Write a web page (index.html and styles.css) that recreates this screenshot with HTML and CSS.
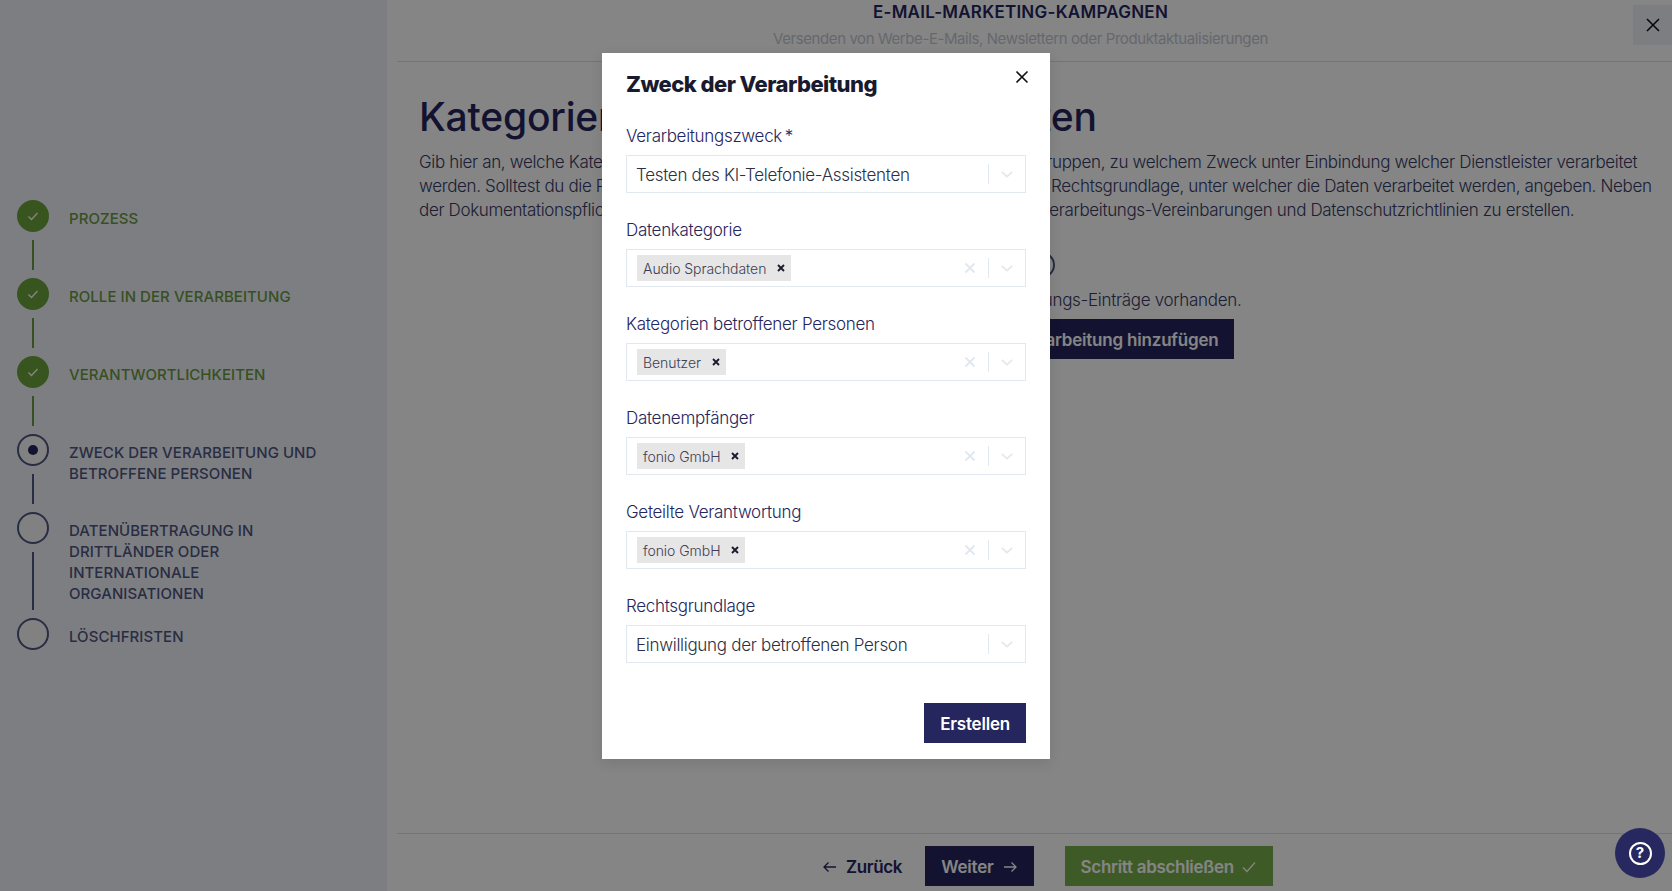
FILE: index.html
```html
<!DOCTYPE html>
<html lang="de">
<head>
<meta charset="utf-8">
<title>Zweck der Verarbeitung</title>
<link rel="stylesheet" href="styles.css">
</head>
<body>
<div class="page">
  <aside class="sidebar">
    <ol class="steps">
      <li class="step done">
        <div class="rail"><span class="dot"><svg viewBox="0 0 16 16" class="check"><path d="M3.500 8.500l3 3 6-6.500"/></svg></span><span class="link"></span></div>
        <span class="step-label">Prozess</span>
      </li>
      <li class="step done">
        <div class="rail"><span class="dot"><svg viewBox="0 0 16 16" class="check"><path d="M3.500 8.500l3 3 6-6.500"/></svg></span><span class="link"></span></div>
        <span class="step-label">Rolle in der Verarbeitung</span>
      </li>
      <li class="step done">
        <div class="rail"><span class="dot"><svg viewBox="0 0 16 16" class="check"><path d="M3.500 8.500l3 3 6-6.500"/></svg></span><span class="link"></span></div>
        <span class="step-label">Verantwortlichkeiten</span>
      </li>
      <li class="step current">
        <div class="rail"><span class="dot"><i class="pip"></i></span><span class="link"></span></div>
        <span class="step-label">Zweck der Verarbeitung und betroffene Personen</span>
      </li>
      <li class="step">
        <div class="rail"><span class="dot"></span><span class="link"></span></div>
        <span class="step-label">Datenübertragung in Drittländer oder internationale Organisationen</span>
      </li>
      <li class="step">
        <div class="rail"><span class="dot"></span></div>
        <span class="step-label">Löschfristen</span>
      </li>
    </ol>
  </aside>
  <main class="main">
    <header class="top">
      <h2 class="top-title">E-Mail-Marketing-Kampagnen</h2>
      <p class="top-sub">Versenden von Werbe-E-Mails, Newslettern oder Produktaktualisierungen</p>
      <button class="top-close" aria-label="Schließen"><svg viewBox="0 0 16 16" class="x"><path d="M2 2l12 12M14 2L2 14"/></svg></button>
    </header>
    <section class="content">
      <h1 class="heading">Kategorien von Personen und Daten</h1>
      <p class="intro">Gib hier an, welche Kategorien personenbezogener Daten von welchen Personengruppen, zu welchem Zweck unter Einbindung welcher Dienstleister verarbeitet<br>werden. Solltest du die Personen nicht selbst genau kennen, gib bitte hier auch, die Rechtsgrundlage, unter welcher die Daten verarbeitet werden, angeben. Neben<br>der Dokumentationspflicht hilft dir das dabei, auch schnell, deine eigenen Auftragsverarbeitungs-Vereinbarungen und Datenschutzrichtlinien zu erstellen.</p>
      <div class="sub"><svg viewBox="0 0 26 26" class="sub-icon"><circle cx="13" cy="13" r="12"/></svg></div>
      <p class="empty">Es sind noch keine Verarbeitungs-Einträge vorhanden.</p>
      <button class="btn navy add">Verarbeitung hinzufügen</button>
    </section>
    <footer class="bottom">
      <button class="btn ghost"><svg viewBox="0 0 16 16" class="arrow"><path d="M14 8H2M6.500 3.500L2 8l4.500 4.500"/></svg>Zurück</button>
      <button class="btn navy">Weiter<svg viewBox="0 0 16 16" class="arrow"><path d="M2 8h12M9.500 3.500L14 8l-4.500 4.500"/></svg></button>
      <button class="btn green">Schritt abschließen<svg viewBox="0 0 16 16" class="arrow"><path d="M2 8.500l4 4 8-9"/></svg></button>
    </footer>
  </main>
</div>

<div class="overlay">
  <div class="modal">
    <div class="modal-head">
      <h2 class="modal-title">Zweck der Verarbeitung</h2>
      <button class="modal-close" aria-label="Schließen"><svg viewBox="0 0 16 16" class="x"><path d="M2.500 2.500l11 11M13.500 2.500l-11 11"/></svg></button>
    </div>
    <div class="fields">
      <div class="field">
        <label class="label">Verarbeitungszweck&#8201;*</label>
        <div class="select"><span class="value">Testen des KI-Telefonie-Assistenten</span><span class="sep"></span><svg viewBox="0 0 16 16" class="chev"><path d="M2 5.500L8 11l6-5.500"/></svg></div>
      </div>
      <div class="field">
        <label class="label">Datenkategorie</label>
        <div class="select"><span class="tag">Audio Sprachdaten<svg viewBox="0 0 8 8" class="tag-x"><path d="M1 1l6 6M7 1L1 7"/></svg></span><svg viewBox="0 0 12 12" class="clear"><path d="M1.500 1.500l9 9M10.500 1.500l-9 9"/></svg><span class="sep"></span><svg viewBox="0 0 16 16" class="chev"><path d="M2 5.500L8 11l6-5.500"/></svg></div>
      </div>
      <div class="field">
        <label class="label">Kategorien betroffener Personen</label>
        <div class="select"><span class="tag">Benutzer<svg viewBox="0 0 8 8" class="tag-x"><path d="M1 1l6 6M7 1L1 7"/></svg></span><svg viewBox="0 0 12 12" class="clear"><path d="M1.500 1.500l9 9M10.500 1.500l-9 9"/></svg><span class="sep"></span><svg viewBox="0 0 16 16" class="chev"><path d="M2 5.500L8 11l6-5.500"/></svg></div>
      </div>
      <div class="field">
        <label class="label">Datenempfänger</label>
        <div class="select"><span class="tag">fonio GmbH<svg viewBox="0 0 8 8" class="tag-x"><path d="M1 1l6 6M7 1L1 7"/></svg></span><svg viewBox="0 0 12 12" class="clear"><path d="M1.500 1.500l9 9M10.500 1.500l-9 9"/></svg><span class="sep"></span><svg viewBox="0 0 16 16" class="chev"><path d="M2 5.500L8 11l6-5.500"/></svg></div>
      </div>
      <div class="field">
        <label class="label">Geteilte Verantwortung</label>
        <div class="select"><span class="tag">fonio GmbH<svg viewBox="0 0 8 8" class="tag-x"><path d="M1 1l6 6M7 1L1 7"/></svg></span><svg viewBox="0 0 12 12" class="clear"><path d="M1.500 1.500l9 9M10.500 1.500l-9 9"/></svg><span class="sep"></span><svg viewBox="0 0 16 16" class="chev"><path d="M2 5.500L8 11l6-5.500"/></svg></div>
      </div>
      <div class="field">
        <label class="label">Rechtsgrundlage</label>
        <div class="select"><span class="value">Einwilligung der betroffenen Person</span><span class="sep"></span><svg viewBox="0 0 16 16" class="chev"><path d="M2 5.500L8 11l6-5.500"/></svg></div>
      </div>
    </div>
    <div class="modal-foot"><button class="btn navy create">Erstellen</button></div>
  </div>
</div>
<button class="help" aria-label="Hilfe"><span class="help-ring">?</span></button>
</body>
</html>
```
FILE: styles.css
```css
* { box-sizing: border-box; }
html, body { margin: 0; height: 100%; }
body {
  font-family: Inter, "Liberation Sans", sans-serif;
  color: #4f5488;
  overflow: hidden;
  background: #fff;
}
button { font: inherit; border: 0; background: none; padding: 0; }
h1, h2, h3, p, ol { margin: 0; padding: 0; }

.page { display: flex; height: 891px; }

.sidebar { width: 387px; flex: none; background: #f0f2fa; padding: 200px 0 0 17px; }
.steps { list-style: none; }
.step { display: flex; min-height: 78px; gap: 20px; }
.rail { display: flex; flex-direction: column; align-items: center; width: 32px; flex: none; }
.dot {
  width: 32px; height: 32px; border-radius: 50%; flex: none;
  border: 2px solid #4f5680; background: #f8f8f8;
  display: flex; align-items: center; justify-content: center;
}
.link { width: 2px; flex: 1; margin: 8px 0; background: #4f5680; }
.step-label {
  width: 260px; padding: 8px 0 14px;
  font-size: 15px; line-height: 21px; font-weight: 500;
  letter-spacing: 0.05px;
  text-transform: uppercase; color: #4f5680;
}
.step:last-child { min-height: 0; }
.done .dot { background: #6ca33d; border-color: #6ca33d; }
.done .link { background: #6a9a40; }
.done .step-label { color: #6a9a40; }
.check { width: 16px; height: 16px; fill: none; stroke: #fff; stroke-width: 1.300; }
.pip { width: 10px; height: 10px; border-radius: 50%; background: #25265e; }

.main { flex: 1; min-width: 0; padding-left: 10px; display: flex; flex-direction: column; }
.top {
  position: relative; height: 62px; border-bottom: 1px solid #dfdfdf;
  display: flex; flex-direction: column; align-items: center; padding: 2px 28px 0 0;
}
.top-title { font-size: 17px; line-height: 21px; font-weight: 600; text-transform: uppercase; color: #25265e; letter-spacing: 0.25px; }
.top-sub { font-size: 15px; line-height: 20px; margin-top: 6px; color: #c4c7d2; letter-spacing: -0.42px; }
.top-close {
  position: absolute; right: 0; top: 5px; width: 39px; height: 40px;
  background: #f0f2fa; display: flex; align-items: center; justify-content: center;
}
.x { width: 16px; height: 16px; fill: none; stroke: #111; stroke-width: 1.600; }

.content { flex: 1; padding: 32px 24px 0 22px; }
.heading { font-size: 39px; line-height: 46px; font-weight: 500; color: #25265e; letter-spacing: -0.2px; word-spacing: 3px; white-space: nowrap; }
.intro { margin-top: 10px; font-size: 17px; line-height: 24px; font-weight: 300; color: #363a66; letter-spacing: -0.35px; white-space: nowrap; }
.sub { margin-top: 27px; display: flex; align-items: center; height: 32px; padding-left: 610px; }
.sub-icon { width: 26px; height: 26px; fill: none; stroke: #50557f; stroke-width: 2; }
.empty { margin-top: 7px; font-size: 17px; line-height: 24px; font-weight: 300; color: #363a66; padding-left: 408px; letter-spacing: -0.3px; }
.add { margin: 7px 0 0 583px; }

.btn { display: inline-flex; align-items: center; height: 40px; padding: 2px 16px 0; font-size: 17px; font-weight: 600; gap: 8px; letter-spacing: -0.2px; }
.navy { background: #25265e; color: #fff; }
.green { background: #78ad49; color: #fff; gap: 7px; letter-spacing: -0.3px; }
.ghost { color: #25265e; padding: 2px 0 0; letter-spacing: -0.35px; }
.arrow { width: 16px; height: 16px; fill: none; stroke: currentColor; stroke-width: 1.300; }

.bottom {
  height: 58px; border-top: 1px solid #dfdfdf;
  display: flex; align-items: flex-start; padding: 12px 0 0 425px; gap: 23px;
}
.bottom .green { margin-left: 8px; }

.overlay { position: absolute; inset: 0; background: rgba(0, 0, 0, .48); display: flex; justify-content: center; align-items: flex-start; padding: 53px 20px 0 0; }
.modal { width: 448px; height: 706px; background: #fff; padding: 0 24px; display: flex; flex-direction: column; box-shadow: 0 4px 12px rgba(0, 0, 0, .1); }
.modal-head { display: flex; justify-content: space-between; height: 73px; padding-top: 16px; }
.modal-title { font-size: 22px; line-height: 30px; font-weight: 800; color: #1a1a2e; letter-spacing: -0.55px; }
.modal-close { width: 16px; height: 16px; margin: 0 -4px 0 0; }
.fields { display: flex; flex-direction: column; gap: 27px; }
.field { height: 67px; display: flex; flex-direction: column; }
.label { height: 21px; margin-bottom: 8px; font-size: 17px; line-height: 21px; font-weight: 300; color: #25265e; letter-spacing: -0.3px; display: block; }
.select {
  height: 38px; border: 1px solid #e2e8f0; background: #fff;
  display: flex; align-items: center; padding: 0 10px 0 9px;
}
.value { flex: 1; padding-top: 2px; font-size: 17px; font-weight: 300; letter-spacing: -0.3px; color: #2c3045; }
.tag { display: inline-flex; align-items: center; height: 26px; margin-left: 1px; padding: 0 6px; background: #e6e6e6; color: #3c4055; font-size: 14px; font-weight: 300; letter-spacing: -0.05px; margin-right: auto; gap: 11px; }
.tag-x { width: 8px; height: 8px; fill: none; stroke: #1b1b2e; stroke-width: 1.900; }
.clear { width: 12px; height: 12px; fill: none; stroke: #e2e8f0; stroke-width: 2; margin-right: 12px; }
.sep { width: 1px; height: 20px; background: #e2e8f0; }
.chev { width: 14px; height: 14px; margin: 0 1px 0 11px; fill: none; stroke: #e2e8f0; stroke-width: 2; }
.modal-foot { display: flex; justify-content: flex-end; margin-top: 40px; }

.help {
  position: absolute; right: 7px; bottom: 13px; width: 50px; height: 50px; border-radius: 50%;
  background: #27285f; display: flex; align-items: center; justify-content: center;
}
.help-ring {
  width: 23px; height: 23px; border: 2.500px solid #fff; border-radius: 50%; color: #fff;
  font-size: 15px; line-height: 18px; font-weight: 700; text-align: center; display: block;
}
```
